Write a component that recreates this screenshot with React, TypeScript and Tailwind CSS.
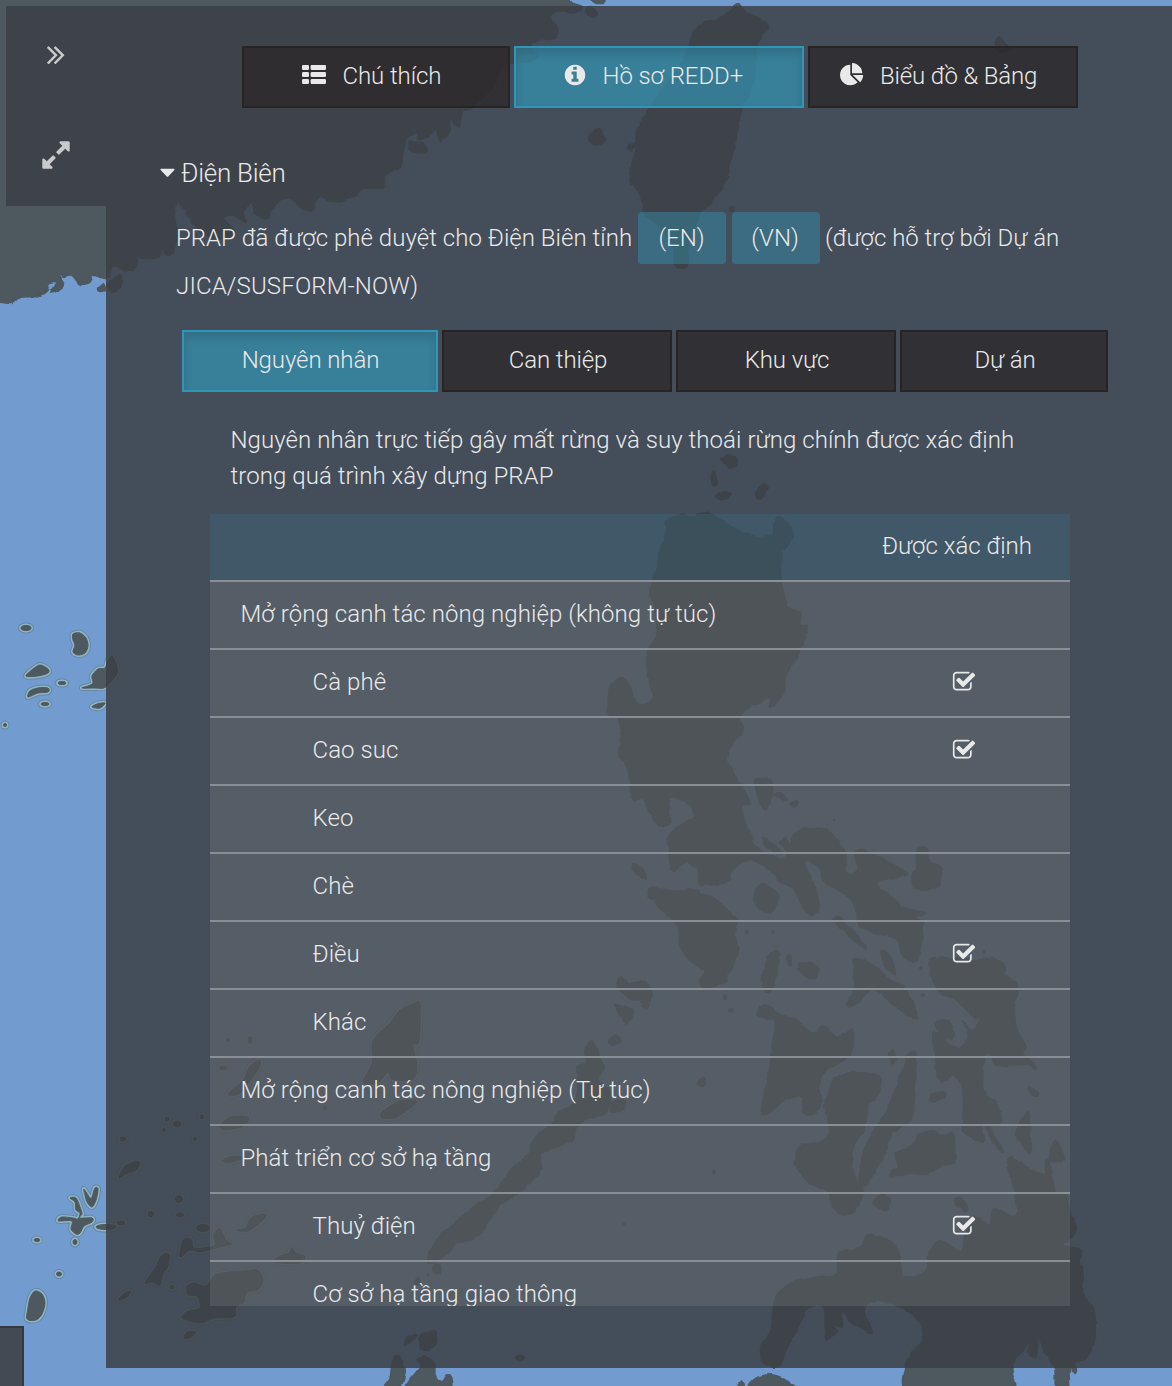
import React from "react";

const SEA = "#729ccf";
const LAND = "#4d585f";

/* Coastlines of the northern and southern parts of the map */
const coast: string[] = [
  // mainland
  "-20,-20 567,-20 567,0 582,7 573,13 560,10 550,17 557,28 555,38 532,43 537,57 527,62 507,63 497,77 493,87 480,100 472,108 463,110 458,127 450,118 450,130 440,140 435,122 433,133 420,140 417,133 407,138 403,150 400,167 385,175 383,188 363,188 353,197 330,202 320,195 312,209 300,207 290,198 277,202 267,218 255,213 253,202 243,212 245,222 233,215 223,218 233,230 230,237 212,238 195,226 188,213 181,205 172,190 177,200 174,213 176,226 180,236 175,245 173,253 167,255 160,248 160,257 142,258 137,252 137,262 132,270 122,270 113,267 106,278 93,275 90,282 80,284 72,275 62,276 57,270 58,275 63,283 62,288 50,293 57,282 48,283 47,290 37,296 20,297 12,303 0,302 -20,302",
  "592,0 604,0 603,3 595,3",
  "587,9 592,8 597,14 593,17 588,14",
  // Taiwan
  "737,4 747,13 762,20 768,28 758,40 756,60 753,83 742,108 737,133 733,150 727,177 713,200 700,213 693,230 688,247 687,265 675,265 673,247 660,227 645,213 640,193 630,180 633,160 637,147 630,150 628,147 636,141 637,130 647,113 660,93 673,77 687,53 692,37 700,25 723,17",
  "589,140 592,132 600,130 605,140 597,145",
  "995,48 999,37 1006,45 1012,49 1002,52",
  "108,285 114,277 122,276 121,286 113,292",
  "410,142 424,145 426,152 412,151",
  "98,288 104,284 106,290 99,291",
  // Luzon
  "667,522 682,513 693,517 707,512 733,528 757,537 772,535 777,518 787,522 793,537 782,553 781,580 788,607 800,612 800,625 807,628 800,650 785,677 784,692 770,707 770,698 750,707 738,717 743,728 733,743 726,760 733,773 750,802 742,807 745,823 752,837 753,845 770,855 780,861 768,868 750,859 731,871 730,881 717,884 700,884 699,872 688,862 678,867 675,871 671,868 669,850 668,838 680,826 695,817 690,805 682,800 668,797 670,820 663,826 653,818 645,803 643,797 635,800 631,792 628,770 618,750 622,744 618,717 609,715 610,687 622,678 630,687 633,697 640,705 650,702 653,692 647,667 648,650 657,637 655,607 650,593 657,567 662,547 667,530",
  "755,780 763,778 772,782 771,798 765,809 759,800",
  "775,794 780,793 787,799 784,800",
  "790,804 797,801 798,804 793,807",
  "762,838 768,840 782,852 776,853 766,846",
  // Bicol
  "750,858 783,859 788,852 780,843 785,838 790,845 795,833 807,829 827,830 842,847 846,855 845,872 855,873 859,867 855,852 863,850 880,858 907,873 897,877 880,880 878,886 896,901 903,908 925,913 914,917 923,923 921,942 916,961 903,956 897,939 877,933 859,925 857,912 848,896 826,883 821,870 808,860 806,867 817,894 818,912 810,915 804,908 793,888 779,881 768,867",
  "917,850 925,848 930,862 940,867 940,885 925,890 912,885 913,873 917,868",
  // Samar and Leyte
  "930,960 938,990 957,1000 975,1018 982,1018 975,1029 970,1030 963,1021 967,1030 968,1040 957,1049 945,1040 932,1033 936,1055 938,1078 948,1080 952,1074 963,1088 963,1120 964,1131 983,1142 982,1124 1001,1122 995,1102 983,1090 985,1054 992,1055 997,1065 1028,1064 1034,1070 1036,1068 1030,1059 1021,1055 1026,1047 1017,1030 1014,1005 1018,985 1004,975 1005,967 993,958 975,960 960,959",
  // Batanes
  "722,458 728,455 736,458 736,466 729,467 724,463",
  "711,474 714,473 717,484 713,485",
  "717,497 723,492 731,494 728,498 720,499",
  "757,499 758,489 763,484 768,488 763,497",
  // Palawan
  "592,1042 598,1052 603,1068 598,1080 610,1093 605,1113 587,1118 575,1127 572,1140 542,1153 540,1170 520,1193 500,1205 477,1237 457,1242 448,1253 430,1263 428,1257 440,1237 470,1210 493,1193 513,1168 528,1155 533,1140 553,1123 557,1113 573,1105 578,1090 577,1067 587,1063 585,1050",
  "609,1042 616,1035 619,1042 612,1045",
  "612,1103 624,1100 624,1108 612,1112",
  "433,1265 440,1265 439,1273 434,1272",
  "415,1283 419,1279 420,1284",
  // Calamian
  "620,977 629,983 645,982 651,990 647,1009 640,1000 631,999 618,988",
  "616,1004 633,1011 631,1018 626,1024 619,1014",
  // Mindanao
  "1012,1157 1030,1170 1051,1178 1056,1195 1067,1195 1069,1212 1076,1226 1073,1236 1062,1245 1081,1250 1079,1262 1083,1274 1083,1294 1094,1311 1094,1342 1085,1359 1076,1361 1076,1373 1069,1370 1069,1396 1056,1396 1055,1370 1045,1352 1039,1337 1036,1356 1028,1352 1030,1341 1012,1366 1009,1396 912,1396 906,1363 923,1339 917,1318 905,1310 892,1303 874,1301 863,1311 872,1332 852,1322 842,1310 841,1326 833,1324 836,1332 826,1338 824,1306 808,1308 797,1329 788,1346 779,1366 764,1363 761,1346 771,1332 775,1301 790,1284 819,1277 837,1274 839,1253 861,1248 868,1235 890,1241 899,1253 903,1276 925,1272 930,1250 941,1241 961,1252 965,1236 974,1216 990,1226 994,1209 1016,1216 1016,1195 1008,1168",
  "750,1392 755,1379 771,1375 785,1380 797,1392",
  "738,1386 741,1381 744,1386",
  // Borneo tip
  "380,1392 390,1378 393,1358 400,1357 405,1372 397,1392",
  "405,1392 420,1367 417,1360 424,1357 434,1362 435,1375 441,1382 447,1375 452,1380 448,1392",
  "420,1336 427,1333 436,1333 435,1345 422,1350",
  "405,1344 408,1337 417,1334 412,1341",
];

/* Visayas, drawn on a slightly taller grid and scaled into place */
const visayas: string[] = [
  "649,894 655,891 677,894 697,892 700,897 713,901 730,917 737,925 734,938 738,961 728,981 726,990 706,997 700,990 704,979 689,967 680,952 678,932 658,910 656,903 649,901",
  "760,888 766,888 778,897 777,905 770,917 755,908 756,892",
  "633,865 640,868 647,880 640,878 633,870",
  "770,961 779,959 777,978 770,1001 765,1000 763,985",
  "799,972 806,970 817,975 817,984 811,988 801,980",
  "786,964 790,963 791,973 787,971",
  "837,921 843,927 855,939 866,956 852,943 835,927",
  "881,958 887,960 892,969 895,983 886,974",
  "855,965 877,976 888,988 901,994 912,1011 916,1031 892,1014 874,997 859,1011 850,1016 848,1014 855,996 854,978",
  "936,1034 946,1032 954,1043 951,1051 940,1047",
  "761,1016 771,1018 780,1026 797,1032 812,1047 824,1038 837,1050 852,1042 850,1069 826,1085 819,1105 821,1120 815,1131 804,1131 802,1113 782,1118 768,1131 762,1129 766,1102 770,1083 772,1060 775,1032 759,1028",
  "837,1093 857,1087 879,1093 879,1109 868,1124 863,1149 852,1171 854,1197 863,1215 854,1235 841,1239 833,1229 828,1215 808,1204 796,1186 799,1167 819,1162 828,1156 828,1135 825,1120 830,1105",
  "910,1066 916,1069 914,1105 913,1131 906,1142 892,1153 885,1171 875,1193 863,1211 860,1204 864,1171 879,1142 892,1116 903,1083",
  "889,1068 894,1064 896,1073 892,1078",
  "896,1175 914,1164 917,1155 932,1150 945,1155 953,1153 954,1184 941,1186 928,1196 910,1195 892,1199 892,1193 899,1189",
  "873,1226 882,1218 890,1222 888,1232 881,1233",
  "955,1222 960,1220 967,1230 966,1235 957,1230",
  "985,1142 991,1148 1003,1171 999,1170 990,1156",
  "1027,1129 1029,1140 1030,1173 1023,1165 1016,1153 1022,1138",
  "1056,1160 1064,1180 1052,1182 1051,1171",
  "1046,1182 1050,1183 1050,1196 1046,1195",
  "931,1110 946,1109 944,1115 932,1119",
  "1029,1103 1038,1109 1036,1112 1030,1108",
  "699,1097 704,1093 705,1101 700,1102",
];

/* Reefs and small islands that carry a pale shoreline */
const reefs: string[] = [
  "73,634 80,633 86,638 88,646 85,653 78,655 73,652 75,645 73,640",
  "26,676 33,669 40,665 48,669 48,673 38,676",
  "28,697 30,691 38,688 48,688 48,692 38,693",
  "82,688 88,686 93,683 92,676 98,669 105,668 108,660 112,656 117,666 117,674 110,683 104,688 95,688",
  "92,707 97,704 105,703 100,708",
  "84,1189 90,1198 92,1197 95,1188 98,1189 96,1200 92,1207 87,1202 85,1195",
  "58,1220 62,1217 73,1218 78,1219 80,1213 76,1210 75,1202 70,1198 76,1198 80,1207 82,1214 79,1218 92,1218 92,1222 84,1226 80,1233 76,1234 71,1229 72,1221 60,1221",
  "35,1291 42,1294 45,1303 42,1314 36,1320 27,1319 28,1308 30,1298",
  "119,1178 124,1167 131,1163 136,1161 140,1163 135,1171 128,1173",
  "145,1283 155,1268 162,1255 169,1254 168,1266 163,1274 160,1285 152,1282",
  "180,1257 183,1240 191,1239 194,1248 208,1247 215,1245 214,1235 220,1228 226,1240 232,1244 220,1247 200,1252 190,1250",
  "187,1286 195,1283 206,1286 215,1275 230,1272 245,1271 258,1270 263,1280 258,1290 247,1292 244,1302 236,1307 234,1317 215,1318 200,1323 182,1318 188,1311 200,1308 197,1296 188,1295",
  "235,1230 245,1228 252,1217 266,1214 262,1221 248,1231",
  "273,1262 282,1255 289,1253 292,1247 296,1253 305,1256 300,1263",
  "184,1338 187,1332 196,1332 190,1338",
  "119,1300 123,1294 131,1291 127,1297",
  "413,1004 420,1004 419,1042 413,1045 417,1067 412,1080 392,1079 388,1072 378,1083 363,1082 372,1063 373,1040 390,1023 400,1010",
  "417,1102 397,1117 382,1118 382,1112 400,1101",
  "260,1060 258,1070 240,1093 228,1094 243,1080 250,1066",
  "220,1126 230,1117 248,1117 244,1126 225,1130",
  "223,1160 233,1156 243,1158 228,1163",
];

const islets: [number, number, number, number][] = [
  [26, 628, 5, 2.5],
  [62, 683, 4, 1.5],
  [45, 704, 4, 1.5],
  [5, 725, 1.5, 1.5],
  [106, 1227, 10, 2.5],
  [37, 1240, 3, 1.5],
  [75, 1242, 2, 2.5],
  [59, 1274, 2.5, 2],
  [121, 1223, 4, 2],
  [151, 1214, 3, 3],
  [179, 1199, 3.5, 3.5],
  [180, 1215, 4, 2],
  [177, 1124, 4, 3],
  [167, 1119, 2, 2],
  [164, 1130, 1.5, 2],
  [123, 1139, 3, 2],
  [172, 1287, 2, 2],
  [202, 1117, 2, 2],
  [195, 1139, 1.5, 2],
  [203, 1228, 7, 3.5],
  [223, 1068, 4, 2],
  [250, 1040, 2, 4],
  [228, 1040, 2, 2],
  [325, 1108, 2, 2],
];

const dots: [number, number, number, number][] = [
  [732, 209, 3, 3],
  [837, 1039, 1.5, 1.5],
  [735, 930, 2, 2],
  [747, 932, 2, 2.5],
  [773, 932, 1.5, 2],
  [725, 997, 2, 3],
  [731, 1010, 3, 2.5],
  [834, 820, 1.5, 1.5],
  [921, 968, 2, 2.5],
  [923, 995, 2.5, 1.5],
  [714, 1172, 1.5, 2],
  [520, 1358, 5, 3.5],
  [428, 1275, 1.5, 1.5],
  [624, 1224, 1.5, 1.5],
  [984, 952, 1.5, 2],
];

/* Turns a point list into a closed curve that passes through every point */
function curve(points: string): string {
  const p = points.split(" ").map((s) => s.split(",").map(Number));
  const n = p.length;
  const k = 0.15;
  let d = `M${p[0][0]} ${p[0][1]}`;
  for (let i = 0; i < n; i++) {
    const a = p[(i + n - 1) % n];
    const b = p[i];
    const c = p[(i + 1) % n];
    const e = p[(i + 2) % n];
    const c1 = [b[0] + (c[0] - a[0]) * k, b[1] + (c[1] - a[1]) * k];
    const c2 = [c[0] - (e[0] - b[0]) * k, c[1] - (e[1] - b[1]) * k];
    // segments next to the long map edges stay straight
    const reach = Math.max(
      Math.hypot(c[0] - b[0], c[1] - b[1]),
      Math.hypot(b[0] - a[0], b[1] - a[1]),
      Math.hypot(e[0] - c[0], e[1] - c[1]),
    );
    d += reach > 250 ? `L${c[0]} ${c[1]}` : `C${c1[0]} ${c1[1]} ${c2[0]} ${c2[1]} ${c[0]} ${c[1]}`;
  }
  return d + "Z";
}

const coastPath = coast.map(curve).join("");
const visayasPath = visayas.map(curve).join("");
const reefPath = reefs.map(curve).join("");

function Reefs() {
  return (
    <>
      <path d={reefPath} />
      {islets.map(([x, y, a, b]) => (
        <ellipse key={`${x}-${y}`} cx={x} cy={y} rx={a} ry={b} />
      ))}
    </>
  );
}

function MapBackdrop() {
  return (
    <svg className="absolute inset-0 h-[1386px] w-[1172px]" viewBox="0 0 1172 1386" aria-hidden="true">
      <defs>
        <filter id="shore" x="-20" y="-20" width="1212" height="1426" filterUnits="userSpaceOnUse">
          <feTurbulence type="fractalNoise" baseFrequency="0.11" numOctaves="2" seed="4" />
          <feDisplacementMap in="SourceGraphic" scale="4" xChannelSelector="R" yChannelSelector="G" />
        </filter>
      </defs>
      <rect width="1172" height="1386" fill={SEA} />
      <g fill="#6688a6" stroke="#6688a6" strokeWidth="6" strokeLinejoin="round">
        <Reefs />
      </g>
      <g fill="#8fb4c3" stroke="#8fb4c3" strokeWidth="4" strokeLinejoin="round">
        <Reefs />
      </g>
      <g fill={LAND} stroke={LAND} strokeWidth="1" strokeLinejoin="round">
        <Reefs />
      </g>
      <g filter="url(#shore)" fill={LAND} stroke={LAND} strokeWidth="2" strokeLinejoin="round">
        <path d={coastPath} />
        <path d={visayasPath} transform="translate(0 53.5) scale(1 .937)" />
      </g>
      <g fill={LAND}>
        {dots.map(([x, y, a, b]) => (
          <ellipse key={`${x}-${y}`} cx={x} cy={y} rx={a} ry={b} />
        ))}
      </g>
    </svg>
  );
}

function Glyph({ d, className }: { d: string; className: string }) {
  return (
    <svg viewBox="0 0 1792 1792" fill="currentColor" className={className} aria-hidden="true">
      <path d={d} />
    </svg>
  );
}

const ANGLES =
  "M979 960q0 13-10 23l-466 466q-10 10-23 10t-23-10l-50-50q-10-10-10-23t10-23l393-393-393-393q-10-10-10-23t10-23l50-50q10-10 23-10t23 10l466 466q10 10 10 23zm384 0q0 13-10 23l-466 466q-10 10-23 10t-23-10l-50-50q-10-10-10-23t10-23l393-393-393-393q-10-10-10-23t10-23l50-50q10-10 23-10t23 10l466 466q10 10 10 23z";
const EXPAND =
  "M883 1056q0 13-10 23l-332 332 144 144q19 19 19 45t-19 45-45 19h-448q-26 0-45-19t-19-45v-448q0-26 19-45t45-19 45 19l144 144 332-332q10-10 23-10t23 10l114 114q10 10 10 23zm781-864v448q0 26-19 45t-45 19-45-19l-144-144-332 332q-10 10-23 10t-23-10l-114-114q-10-10-10-23t10-23l332-332-144-144q-19-19-19-45t19-45 45-19h448q26 0 45 19t19 45z";
const INFO =
  "M1152 1376v-160q0-14-9-23t-23-9h-96v-512q0-14-9-23t-23-9h-320q-14 0-23 9t-9 23v160q0 14 9 23t23 9h96v320h-96q-14 0-23 9t-9 23v160q0 14 9 23t23 9h448q14 0 23-9t9-23zm-128-896v-160q0-14-9-23t-23-9h-192q-14 0-23 9t-9 23v160q0 14 9 23t23 9h192q14 0 23-9t9-23zm640 416q0 209-103 385.5t-279.5 279.5-385.5 103-385.5-103-279.5-279.5-103-385.5 103-385.5 279.5-279.5 385.5-103 385.5 103 279.5 279.5 103 385.5z";
const PIE =
  "M768 890l546 546q-106 108-247.5 168t-298.5 60q-209 0-385.5-103t-279.5-279.5-103-385.5 103-385.5 279.5-279.5 385.5-103v762zm187 6h773q0 157-60 298.5t-168 247.5zm709-128h-768v-768q209 0 385.5 103t279.5 279.5 103 385.5z";
const CHECK =
  "M1472 930v318q0 119-84.5 203.5t-203.5 84.5h-832q-119 0-203.5-84.5t-84.5-203.5v-832q0-119 84.5-203.5t203.5-84.5h832q63 0 117 25 15 7 18 23 3 17-9 29l-49 49q-10 10-23 10-3 0-9-2-23-6-45-6h-832q-66 0-113 47t-47 113v832q0 66 47 113t113 47h832q66 0 113-47t47-113v-254q0-13 9-22l64-64q10-10 23-10 6 0 12 3 20 8 20 29zm231-489l-814 814q-24 24-57 24t-57-24l-430-430q-24-24-24-57t24-57l110-110q24-24 57-24t57 24l263 263 647-647q24-24 57-24t57 24l110 110q24 24 24 57t-24 57z";

function ListGlyph() {
  return (
    <svg viewBox="0 0 24 24" fill="currentColor" className="mb-[3px] size-6" aria-hidden="true">
      {[3, 10, 17].map((y) => (
        <g key={y}>
          <rect x="0" y={y} width="7" height="5" rx="1.3" />
          <rect x="8.6" y={y} width="15.4" height="5" rx="1.3" />
        </g>
      ))}
    </svg>
  );
}

function Tab({ active, className, children }: { active?: boolean; className: string; children: React.ReactNode }) {
  const look = active
    ? "border-[#2f96b8] bg-[#329abb]/65 shadow-[inset_0_6px_10px_rgba(0,0,0,0.125)]"
    : "border-[#282424] bg-[#282222]/65";
  return (
    <button
      className={`flex h-[62px] items-center border-2 pb-[3px] tracking-[-0.09px] whitespace-nowrap ${look} ${className}`}
    >
      {children}
    </button>
  );
}

const rows: { label: string; child?: boolean; checked?: boolean }[] = [
  { label: "Mở rộng canh tác nông nghiệp (không tự túc)" },
  { label: "Cà phê", child: true, checked: true },
  { label: "Cao suc", child: true, checked: true },
  { label: "Keo", child: true },
  { label: "Chè", child: true },
  { label: "Điều", child: true, checked: true },
  { label: "Khác", child: true },
  { label: "Mở rộng canh tác nông nghiệp (Tự túc)" },
  { label: "Phát triển cơ sở hạ tầng" },
  { label: "Thuỷ điện", child: true, checked: true },
  { label: "Cơ sở hạ tầng giao thông", child: true },
];

export default function App() {
  return (
    <div className="relative h-[1386px] w-[1172px] overflow-hidden pt-[6px] pl-[6px] font-['Roboto',sans-serif] text-2xl font-light text-[#e9e9e9]">
      <MapBackdrop />
      <div className="absolute bottom-0 left-0 h-[60px] w-6 border-t-2 border-r-2 border-[#35383c] bg-[#444a54]" />

      <div className="relative flex items-start">
        <aside className="flex h-[200px] w-[100px] flex-col gap-[69px] bg-[#3c4045]/85 pt-8 pl-[34px] text-[#c9cacb]">
          <Glyph d={ANGLES} className="size-8" />
          <Glyph d={EXPAND} className="size-8" />
        </aside>

        <main className="h-[1362px] w-[1066px] bg-[#3c4045]/85 pt-10">
          <nav className="ml-[136px] flex gap-1">
            <Tab className="w-[268px] gap-4 pl-[58px]">
              <ListGlyph />
              <span className="pl-[0.5px]">Chú thích</span>
            </Tab>
            <Tab active className="w-[290px] gap-4 pl-[46.5px]">
              <Glyph d={INFO} className="mb-px size-6" />
              <span>Hồ sơ REDD+</span>
            </Tab>
            <Tab className="w-[270px] gap-4 pl-[29.5px]">
              <Glyph d={PIE} className="mb-px size-6" />
              <span className="pl-[0.5px] tracking-[-0.15px]">Biểu đồ &amp; Bảng</span>
            </Tab>
          </nav>

          <div className="mt-[46px] ml-[54px] flex h-[38px] items-center gap-[6px] text-[26px] tracking-[-0.25px]">
            <svg viewBox="0 0 16 10" className="h-[10px] w-[15px]" fill="currentColor" aria-hidden="true">
              <path d="M1 0.5h14q1 .4.3 1.3l-6.5 6.8q-.8.8-1.6 0l-6.500-6.800q-.7-.9.3-1.300z" />
            </svg>
            <span>Điện Biên</span>
          </div>

          <div className="mt-5 ml-[70px] flex h-[52px] items-center gap-[6px] whitespace-nowrap">
            <span className="w-[456px] tracking-[0.03px]">PRAP đã được phê duyệt cho Điện Biên tỉnh</span>
            <a className="flex h-[52px] w-[88px] items-center justify-center rounded bg-[#329abb]/40 pr-px">(EN)</a>
            <a className="flex h-[52px] w-[88px] items-center justify-center rounded bg-[#329abb]/40 pr-[2px]">(VN)</a>
            <span className="-ml-px">(được hỗ trợ bởi Dự án</span>
          </div>
          <div className="-mt-[2px] ml-[70px] leading-[48px] tracking-[0.16px]">JICA/SUSFORM-NOW)</div>

          <nav className="mt-5 ml-[76px] flex gap-1">
            <Tab active className="w-64 justify-center pl-[1px]">Nguyên nhân</Tab>
            <Tab className="w-[230px] justify-center pl-[2px]">Can thiệp</Tab>
            <Tab className="w-[220px] justify-center pl-[2px]">Khu vực</Tab>
            <Tab className="w-[208px] justify-center pl-[2px]">Dự án</Tab>
          </nav>

          <p className="mt-[30px] ml-[124.5px] leading-9 tracking-[0.06px]">
            Nguyên nhân trực tiếp gây mất rừng và suy thoái rừng chính được xác định
            <br />
            trong quá trình xây dựng PRAP
          </p>

          <section className="mt-5 ml-[104px] h-[792px] w-[860px] overflow-hidden">
            <header className="flex h-[66px] items-center justify-end bg-[#329abb]/15 pr-[38px] pb-[2px]">
              Được xác định
            </header>
            {rows.map((r) => (
              <div
                key={r.label}
                className="flex h-[68px] items-center justify-between border-t-2 border-[#898f95] bg-[#f0f0e4]/10 pr-[94px] pb-[2px] tracking-[0.07px]"
              >
                <span className={r.child ? "pl-[102.5px]" : "pl-[30.5px]"}>{r.label}</span>
                {r.checked && <Glyph d={CHECK} className="mb-px size-6" />}
              </div>
            ))}
          </section>
        </main>
      </div>
    </div>
  );
}
